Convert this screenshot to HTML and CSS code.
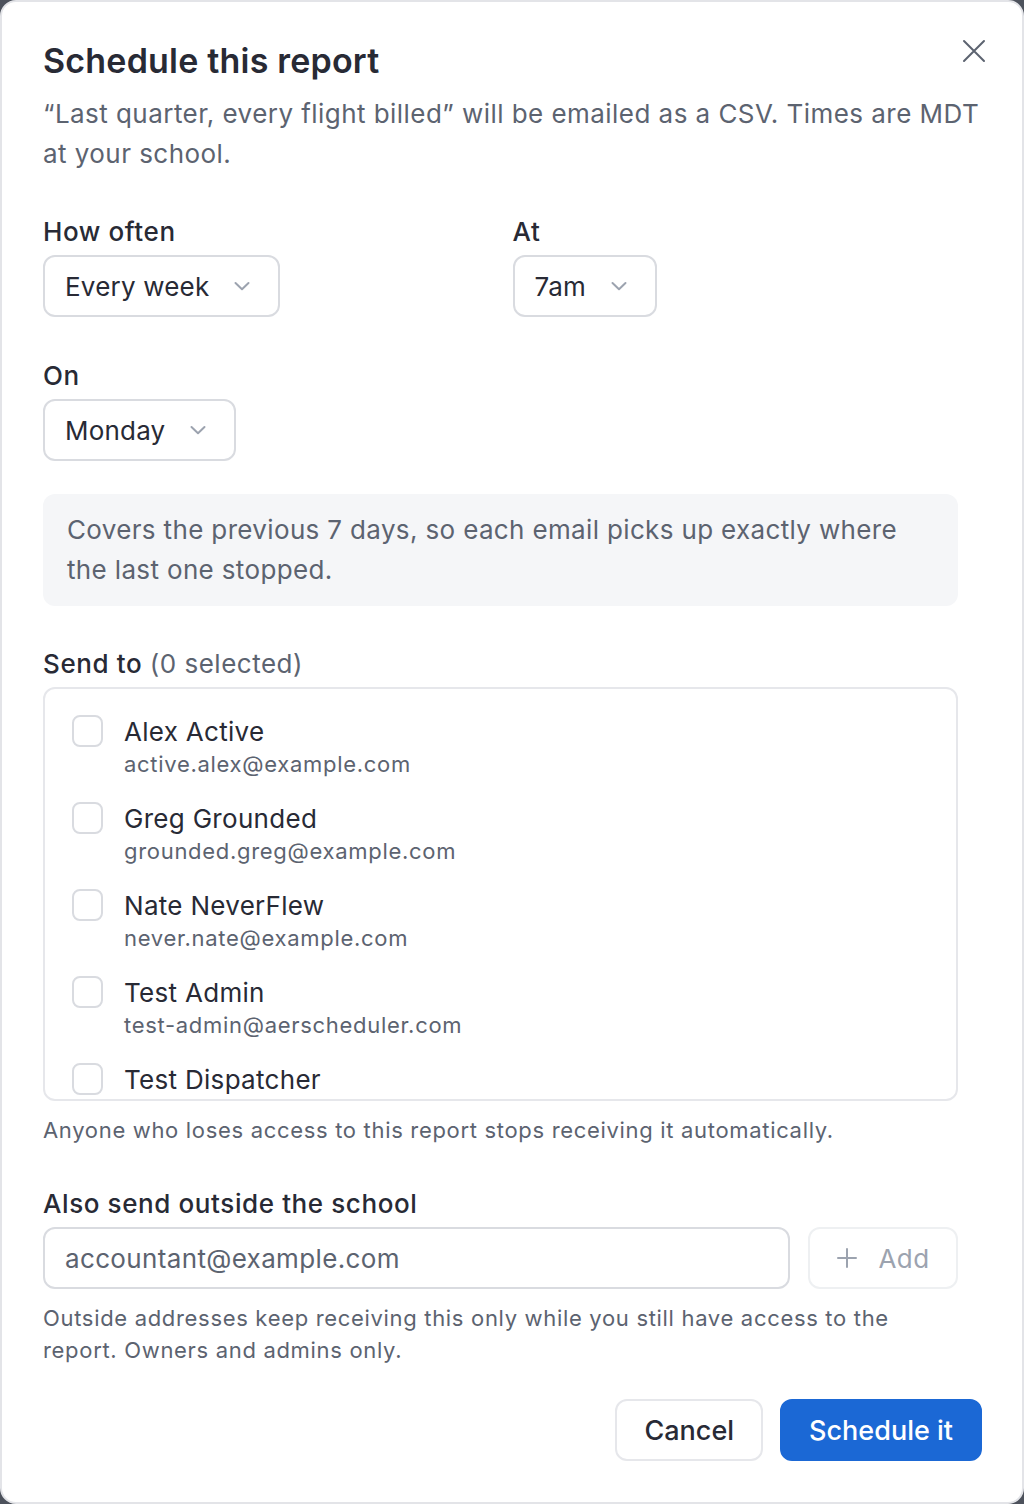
FILE: index.html
```html
<!DOCTYPE html>
<html lang="en">
<head>
  <meta charset="UTF-8" />
  <meta name="viewport" content="width=device-width, initial-scale=1.0" />
  <title>Schedule this report</title>
  <link rel="stylesheet" href="styles.css">
</head>
<body>

  <!-- Schedule dialog -->
  <div class="modal">
    <div class="modal-header">
      <h2>Schedule this report</h2>
      <button class="close-btn" aria-label="Close">
        <svg width="24" height="24" viewBox="0 0 24 24" fill="none" stroke="currentColor" stroke-width="2" stroke-linecap="round">
          <path d="M2 2L22 22M22 2L2 22" />
        </svg>
      </button>
    </div>
    <p class="intro">“Last quarter, every flight billed” will be emailed as a CSV. Times are MDT at your school.</p>

    <div class="row">
      <div class="field">
        <label>How often</label>
        <button class="select">
          <span>Every week</span>
          <svg class="chev" width="16" height="10" viewBox="0 0 16 10" fill="none" stroke="currentColor" stroke-width="2" stroke-linecap="round" stroke-linejoin="round"><path d="M1.5 2L8 8.2L14.5 2" /></svg>
        </button>
      </div>
      <div class="field">
        <label>At</label>
        <button class="select">
          <span>7am</span>
          <svg class="chev" width="16" height="10" viewBox="0 0 16 10" fill="none" stroke="currentColor" stroke-width="2" stroke-linecap="round" stroke-linejoin="round"><path d="M1.5 2L8 8.2L14.5 2" /></svg>
        </button>
      </div>
    </div>

    <div class="field field-on">
      <label>On</label>
      <button class="select">
        <span>Monday</span>
        <svg class="chev" width="16" height="10" viewBox="0 0 16 10" fill="none" stroke="currentColor" stroke-width="2" stroke-linecap="round" stroke-linejoin="round"><path d="M1.5 2L8 8.2L14.5 2" /></svg>
      </button>
    </div>

    <div class="note">Covers the previous 7 days, so each email picks up exactly where the last one stopped.</div>

    <div class="field field-send">
      <label>Send to <span class="count">(0 selected)</span></label>
      <div class="people">
        <label class="person">
          <span class="box"></span>
          <span class="who">
            <span class="name">Alex Active</span>
            <span class="email">active.alex@example.com</span>
          </span>
        </label>
        <label class="person">
          <span class="box"></span>
          <span class="who">
            <span class="name">Greg Grounded</span>
            <span class="email">grounded.greg@example.com</span>
          </span>
        </label>
        <label class="person">
          <span class="box"></span>
          <span class="who">
            <span class="name">Nate NeverFlew</span>
            <span class="email">never.nate@example.com</span>
          </span>
        </label>
        <label class="person">
          <span class="box"></span>
          <span class="who">
            <span class="name">Test Admin</span>
            <span class="email">test-admin@aerscheduler.com</span>
          </span>
        </label>
        <label class="person">
          <span class="box"></span>
          <span class="who">
            <span class="name">Test Dispatcher</span>
            <span class="email">test-dispatcher@aerscheduler.com</span>
          </span>
        </label>
      </div>
      <p class="hint">Anyone who loses access to this report stops receiving it automatically.</p>
    </div>

    <div class="field field-outside">
      <label>Also send outside the school</label>
      <div class="add-row">
        <input type="email" placeholder="accountant@example.com" />
        <button class="add-btn" disabled>
          <svg width="20" height="20" viewBox="0 0 20 20" fill="none" stroke="currentColor" stroke-width="2" stroke-linecap="round"><path d="M10 1V19M1 10H19" /></svg>
          Add
        </button>
      </div>
      <p class="hint hint-wide">Outside addresses keep receiving this only while you still have access to the report. Owners and admins only.</p>
    </div>

    <div class="actions">
      <button class="btn">Cancel</button>
      <button class="btn btn-primary">Schedule it</button>
    </div>
  </div>

</body>
</html>
```

FILE: styles.css
```css
:root {
  --text: #282a35;
  --muted: #5c6370;
  --faint: #9ca3af;
  --line: #d9dbe0;
  --line-soft: #e6e7eb;
  --blue: #1b68d5;
}
* {
  box-sizing: border-box;
}
body {
  margin: 0;
  background: #4d525c;
  font-family: Inter, "Noto Sans", Arial, sans-serif;
  color: var(--text);
  letter-spacing: 0.35px;
}
button, input {
  font-family: inherit;
  letter-spacing: inherit;
}
.modal {
  width: 1024px;
  height: 1504px;
  background: #fff;
  border: 2px solid #e3e4e8;
  border-radius: 16px;
  padding: 38px 40px 40px 41px;
}
.modal-header {
  display: flex;
  justify-content: space-between;
  align-items: flex-start;
}
.modal-header h2 {
  margin: 0;
  font-size: 34px;
  line-height: 42px;
  font-weight: 600;
  letter-spacing: 0.2px;
}
.close-btn {
  border: 0;
  background: none;
  padding: 0;
  margin: -1px -4px 0 0;
  color: var(--muted);
  display: flex;
}
.intro {
  margin: 12px 0 0;
  font-size: 26px;
  line-height: 40px;
  letter-spacing: 0.45px;
  color: var(--muted);
}
.row {
  display: grid;
  grid-template-columns: 1fr 1fr;
  gap: 24px;
  max-width: 915px;
  margin-top: 43px;
}
.field {
  display: flex;
  flex-direction: column;
  align-items: flex-start;
  gap: 8px;
}
.field label {
  font-size: 26px;
  line-height: 30px;
  font-weight: 500;
  letter-spacing: 0.6px;
}
.field-on {
  margin-top: 44px;
}
.select {
  display: flex;
  align-items: center;
  gap: 25px;
  height: 62px;
  padding: 0 28px 0 20px;
  background: #fff;
  border: 2px solid var(--line);
  border-radius: 12px;
  font-size: 26px;
  letter-spacing: 0.2px;
  color: var(--text);
}
.chev {
  color: var(--faint);
}
.note {
  max-width: 915px;
  margin-top: 33px;
  padding: 16px 24px;
  background: #f5f6f8;
  border-radius: 12px;
  font-size: 26px;
  line-height: 40px;
  color: var(--muted);
}
.field-send {
  margin-top: 43px;
  max-width: 915px;
  align-items: stretch;
}
.field .count {
  font-weight: 400;
  letter-spacing: 0.5px;
  color: var(--muted);
}
.people {
  height: 414px;
  overflow-y: auto;
  scrollbar-width: none;
  border: 2px solid var(--line-soft);
  border-radius: 12px;
  padding: 26px 27px 24px;
  display: flex;
  flex-direction: column;
  gap: 23px;
}
.field .person {
  display: flex;
  align-items: flex-start;
  gap: 21px;
  font-weight: 400;
  line-height: normal;
  letter-spacing: 0.3px;
}
.box {
  flex: none;
  width: 31px;
  height: 32px;
  border: 2px solid var(--line);
  border-radius: 8px;
}
.who {
  display: flex;
  flex-direction: column;
}
.name {
  font-size: 26px;
  line-height: 34px;
}
.email {
  font-size: 22px;
  line-height: 30px;
  letter-spacing: 0.7px;
  color: var(--muted);
}
.hint {
  margin: 6px 0 0;
  font-size: 22px;
  line-height: 30px;
  letter-spacing: 0.68px;
  color: var(--muted);
}
.field-outside {
  margin-top: 44px;
  align-items: stretch;
}
.add-row {
  display: flex;
  gap: 18px;
  max-width: 915px;
}
.add-row input {
  flex: 1;
  height: 62px;
  padding: 0 20px;
  border: 2px solid var(--line);
  border-radius: 12px;
  font-size: 26px;
  color: var(--text);
}
.add-row input::placeholder {
  color: var(--muted);
}
.add-btn {
  width: 150px;
  height: 62px;
  display: flex;
  align-items: center;
  justify-content: center;
  gap: 22px;
  background: #fff;
  border: 2px solid #eef0f2;
  border-radius: 12px;
  font-size: 26px;
  color: var(--faint);
}
.hint-wide {
  max-width: 915px;
  margin-top: 5px;
  line-height: 32px;
}
.actions {
  display: flex;
  justify-content: flex-end;
  gap: 17px;
  margin-top: 33px;
}
.btn {
  height: 62px;
  padding: 0 27px;
  background: #fff;
  border: 2px solid var(--line-soft);
  border-radius: 12px;
  font-size: 27px;
  font-weight: 500;
  letter-spacing: 0;
  color: var(--text);
}
.btn-primary {
  background: var(--blue);
  border-color: var(--blue);
  color: #fff;
}
```
